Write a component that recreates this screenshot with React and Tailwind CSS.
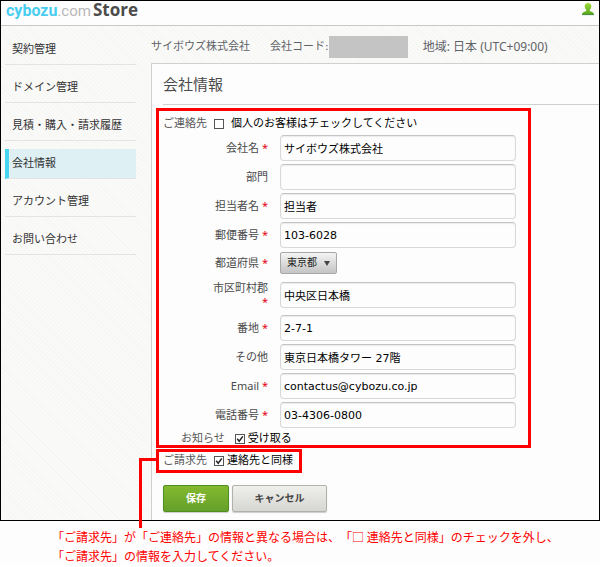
import React from "react"

const menuItems = [
  "契約管理",
  "ドメイン管理",
  "見積・購入・請求履歴",
  "会社情報",
  "アカウント管理",
  "お問い合わせ",
]

const texture =
  "bg-[repeating-linear-gradient(45deg,#f6f6f4_0px,#f6f6f4_1px,#fafaf9_1px,#fafaf9_3px)]"

function UserIcon() {
  return (
    <svg viewBox="0 0 14 14" className="w-[14px] h-[14px]" aria-hidden="true">
      <defs>
        <linearGradient id="user" x1="0" y1="0" x2="0" y2="1">
          <stop offset="0" stopColor="#a2dc3c" />
          <stop offset="1" stopColor="#55a51c" />
        </linearGradient>
      </defs>
      <path
        d="M7 1C4.7 1 3.6 2.4 3.7 4.3C3.8 6 4.5 7.2 5.2 7.9V8.9C4 9.6 1.2 9.9 1 12.6H13C12.8 9.9 10 9.6 8.8 8.9V7.9C9.5 7.2 10.2 6 10.3 4.3C10.4 2.4 9.3 1 7 1Z"
        fill="url(#user)"
      />
      <path d="M1 12.6H13" stroke="#3f8a3c" strokeWidth="1" />
    </svg>
  )
}

function Header() {
  return (
    <header className="flex h-[25px] items-start justify-between border-b border-[#c8c8c8] bg-[#fdfdfd] pl-[5px] pr-1">
      <h1 className="flex items-baseline font-['Open_Sans',sans-serif] leading-[17px]">
        <span className="font-['Roboto',sans-serif] text-[16px] font-bold text-[#48cdf0]">cybozu</span>
        <span className="font-['Roboto',sans-serif] text-[15px] text-[#b8b8b8]">.com</span>
        <span className="ml-[2px] text-[17px] font-bold text-[#4c4c4c]">Store</span>
      </h1>
      <button type="button" aria-label="ユーザー" className="mt-[1px]">
        <UserIcon />
      </button>
    </header>
  )
}

function Sidebar() {
  return (
    <nav className="w-[150px] shrink-0 pl-1 pr-[15px] pt-[1px]">
      <ul>
        {menuItems.map((item) => (
          <li key={item} className="pt-2">
            <a
              href="#"
              className={
                item === "会社情報"
                  ? "block h-[30px] border-b border-l-4 border-b-[#e4e4e4] border-l-[#48d5f2] bg-[#dff0f4] pl-[3px] leading-[30px] text-[#333]"
                  : "block h-[30px] border-b border-[#e4e4e4] pl-[7px] leading-[30px] text-[#333]"
              }
            >
              {item}
            </a>
          </li>
        ))}
      </ul>
    </nav>
  )
}

function Check({ id, checked, children, gap = "gap-[3px]" }) {
  return (
    <label htmlFor={id} className={`flex items-center text-black ${gap}`}>
      <span className="relative flex">
        <input
          id={id}
          type="checkbox"
          defaultChecked={checked}
          className="peer h-[10px] w-[10px] appearance-none border border-[#555] bg-white"
        />
        <svg
          viewBox="0 0 10 10"
          className="pointer-events-none absolute inset-0 hidden h-[10px] w-[10px] peer-checked:block"
          fill="none"
          stroke="#222"
          strokeWidth="1.5"
        >
          <path d="M2.2 4.8L4.2 7.2L7.8 2.4" />
        </svg>
      </span>
      {children}
    </label>
  )
}

function Label({ id, required, children }) {
  return (
    <label
      htmlFor={id}
      className="w-[60px] shrink-0 text-right font-['Noto_Sans','Noto_Sans_CJK_JP',sans-serif] leading-[14px] text-[#4a4a4a]"
    >
      {children}
      {required && <span className="text-[#e60012]"> *</span>}
    </label>
  )
}

function Field({ id, label, required, value }) {
  return (
    <div className="flex h-[26px] items-center gap-3 pl-[45px]">
      <Label id={id} required={required}>
        {label}
      </Label>
      <input
        id={id}
        type="text"
        defaultValue={value}
        className="h-[26px] min-w-0 flex-1 rounded border border-[#d8d8d8] border-t-[#c4c4c4] bg-[#fdfdfd] px-[3px] text-black shadow-[inset_0_1px_1px_#ececec]"
      />
    </div>
  )
}

function ContactBox() {
  return (
    <fieldset className="w-full max-w-[375px] border-3 border-[#f00] pl-1 pr-3 pt-1">
      <div className="flex h-[18px] items-center gap-[7px]">
        <span className="text-[#555]">ご連絡先</span>
        <Check id="personal" gap="gap-[7px]">
          個人のお客様はチェックしてください
        </Check>
      </div>
      <div className="mt-[2px] flex flex-col gap-[3px]">
        <Field id="company" label="会社名" required value="サイボウズ株式会社" />
        <Field id="department" label="部門" value="" />
        <Field id="person" label="担当者名" required value="担当者" />
        <Field id="zip" label="郵便番号" required value="103-6028" />
        <div className="flex h-[24px] items-center gap-3 pl-[45px]">
          <Label id="prefecture" required>
            都道府県
          </Label>
          <div className="relative">
            <select
              id="prefecture"
              className="block h-[22px] w-[57px] appearance-none rounded-xs border border-[#a8a8a8] bg-linear-to-b from-[#f4f4f4] to-[#c4c4c4] pl-[6px] text-[10px] text-[#222]"
            >
              <option>東京都</option>
            </select>
            <svg viewBox="0 0 6 5" className="pointer-events-none absolute right-[7px] top-[9px] h-[5px] w-[6px]">
              <path d="M0 0H6L3 5Z" fill="#444" />
            </svg>
          </div>
        </div>
        <div className="py-1">
          <Field id="city" label="市区町村郡" required value="中央区日本橋" />
        </div>
        <Field id="street" label="番地" required value="2-7-1" />
        <Field id="building" label="その他" value="東京日本橋タワー 27階" />
        <Field id="email" label="Email" required value="contactus@cybozu.co.jp" />
        <Field id="phone" label="電話番号" required value="03-4306-0800" />
      </div>
      <div className="mt-[5px] flex h-[12px] items-center gap-[10px] pl-[18px]">
        <span className="text-[#555]">お知らせ</span>
        <Check id="news" checked>
          受け取る
        </Check>
      </div>
    </fieldset>
  )
}

function BillingBox() {
  return (
    <div className="relative mt-[1px] flex h-[24px] w-[146px] items-center gap-[7px] border-3 border-[#f00] pl-1">
      <span className="text-[#555]">ご請求先</span>
      <Check id="same" checked>
        連絡先と同様
      </Check>
      {/* leader line to the note under the frame */}
      <div className="absolute right-full top-[6px] h-[70px] w-[20px] border-l-3 border-t-3 border-[#f00]" />
    </div>
  )
}

function App() {
  return (
    <div className="bg-[#fdfdfd] font-['DejaVu_Sans','Noto_Sans_CJK_JP',sans-serif] text-[11px] leading-[14px]">
      <div className="border border-black">
        <Header />
        <div className={`flex ${texture}`}>
          <Sidebar />
          <div className="flex min-w-0 flex-1 flex-col">
            <div className="flex h-[37px] items-center pt-1 text-[#5f6368]">
              <span>サイボウズ株式会社</span>
              <span className="ml-5">会社コード:</span>
              <span className="h-[22px] w-[79px] bg-[#c4c4c4]" />
              <span className="ml-[15px] font-['Noto_Sans','Noto_Sans_CJK_JP',sans-serif] text-[12px]">
                地域: 日本 (UTC+09:00)
              </span>
            </div>
            <main className="border-l border-t border-[#d0d0d0] bg-[#fdfdfd] pb-2 pl-1">
              <h2 className="mb-[3px] ml-[7px] h-[41px] border-b border-[#d0d0d0] text-[15px] leading-[43px] text-[#4a4a4a]">
                会社情報
              </h2>
              <ContactBox />
              <BillingBox />
              <div className="ml-[7px] mt-3 flex gap-[3px] text-[10px] font-bold">
                <button
                  type="button"
                  className="h-[27px] w-[66px] rounded-xs border border-[#4f8f1f] bg-linear-to-b from-[#84b92f] to-[#64a02a] text-white shadow-[0_1px_1px_#ccc]"
                >
                  保存
                </button>
                <button
                  type="button"
                  className="h-[27px] w-[95px] rounded-xs border border-[#b0b0ac] bg-linear-to-b from-[#efefec] to-[#d6d6d2] text-[#444] shadow-[0_1px_1px_#ccc]"
                >
                  キャンセル
                </button>
              </div>
            </main>
          </div>
        </div>
      </div>
      <p className="pl-[52px] pt-[6px] font-['Noto_Sans_CJK_JP',sans-serif] text-[12px] leading-[19px] text-[#f00] [text-spacing-trim:space-all]">
        「ご請求先」が「ご連絡先」の情報と異なる場合は、「□ 連絡先と同様」のチェックを外し、
        <br />
        「ご請求先」の情報を入力してください。
      </p>
    </div>
  )
}

export default App
